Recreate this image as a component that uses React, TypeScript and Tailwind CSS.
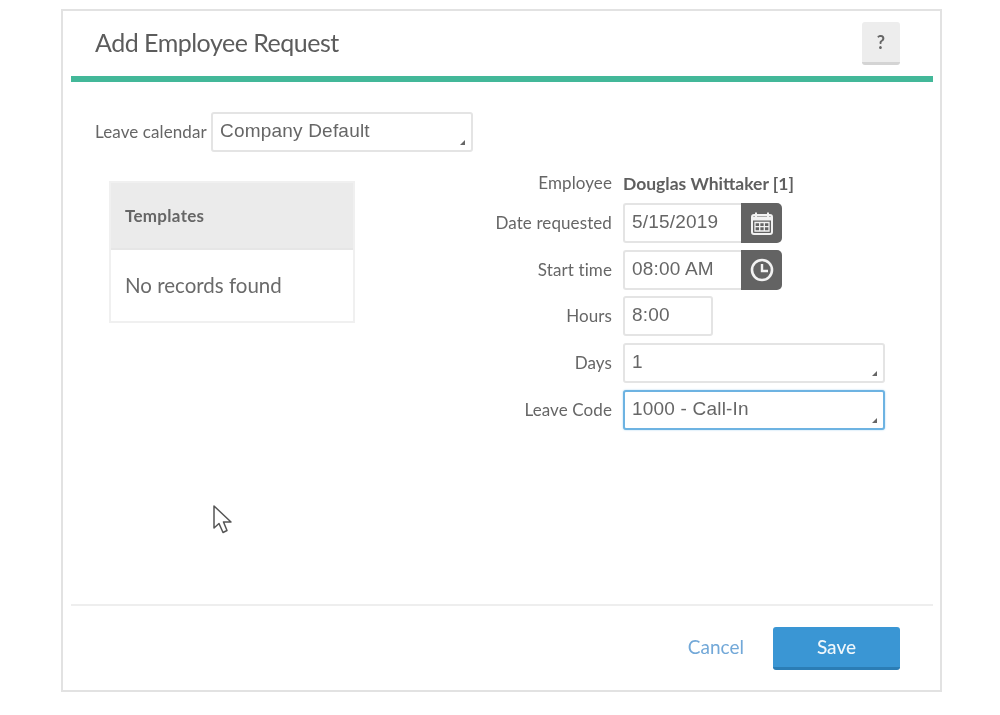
import React from "react";

const lato = "font-['Lato','Open_Sans',sans-serif]";
const arial = "font-['Liberation_Sans',Arial,sans-serif]";

function Grip() {
  return (
    <svg className="absolute right-[6px] bottom-[5px]" width="5" height="5" viewBox="0 0 5 5">
      <path d="M5 0V5H0Z" fill="#666" />
    </svg>
  );
}

function Label({ children }: { children: React.ReactNode }) {
  return (
    <div className={`${lato} w-[211px] pb-[2px] pr-[11px] text-right text-[17px] leading-none tracking-[0.1px] text-[#666]`}>{children}</div>
  );
}

function Box({ children, w, grip, focus, addon }: { children: React.ReactNode; w: string; grip?: boolean; focus?: boolean; addon?: boolean }) {
  return (
    <div
      className={`${arial} ${w} ${focus ? "border-[#6db3e2] shadow-[0_0_2px_#a5d2ee]" : "border-[#e4e4e4]"} ${addon ? "rounded-l-[3px] border-r-0" : "rounded-[3px]"} relative h-[40px] border-2 bg-white pl-[7px] pt-[4px] text-[19px] leading-[26px] tracking-[0.2px] text-[#666]`}
    >
      {children}
      {grip && <Grip />}
    </div>
  );
}

function AddonButton({ children }: { children: React.ReactNode }) {
  return (
    <div className="flex h-[40px] w-[41px] items-center justify-center rounded-r-[5px] bg-[#636363]">{children}</div>
  );
}

function FormRow({ label, children }: { label: string; children: React.ReactNode }) {
  return (
    <div className="flex h-[40px] items-center">
      <Label>{label}</Label>
      {children}
    </div>
  );
}

export default function App() {
  return (
    <div className="relative h-[715px] w-[1000px] bg-white pl-[61px] pt-[9px] blur-[0.4px]">
      <div className="flex h-[683px] w-[881px] flex-col border-2 border-[#e2e2e2] pl-[8px] pr-[7px]">
        <header className="flex h-[65px] items-start justify-between pl-[24px] pr-[33px]">
          <h1 className={`${lato} pt-[15px] text-[25px] font-normal leading-[32px] tracking-[-0.5px] text-[#5c5c5c]`}>Add Employee Request</h1>
          <div className={`${lato} mt-[11px] flex h-[43px] w-[38px] items-center justify-center rounded-[3px] border-b-[3px] border-[#d4d4d4] bg-[#ededed] text-[18px] font-bold text-[#666]`}>?</div>
        </header>
        <div className="h-[6px] bg-[#43b899]" />

        <main className="flex-1 pl-[24px]">
          <div className="mt-[30px] flex h-[40px] items-center">
            <span className={`${lato} w-[116px] pb-[2px] text-[17px] leading-none tracking-[0.1px] text-[#666]`}>Leave calendar</span>
            <Box w="w-[262px]" grip>Company Default</Box>
          </div>

          <div className="mt-[29px] flex items-start">
            <section className={`${lato} ml-[14px] h-[142px] w-[246px] border-2 border-[#f0f0f0]`}>
              <div className="flex h-[65px] items-center bg-[#ebebeb] pl-[14px] text-[17px] font-bold tracking-[0.3px] text-[#666]">Templates</div>
              <div className="flex h-[73px] items-center border-t-2 border-[#e6e6e6] pl-[14px] text-[20.5px] text-[#6a6a6a]">No records found</div>
            </section>

            <div className="ml-[57px] flex flex-col gap-[7px]">
              <div className="-mt-[5px] mb-[5px] flex h-[15px] items-center">
                <Label>Employee</Label>
                <span className={`${lato} text-[17.5px] font-bold leading-none text-[#5f5f5f]`}>Douglas Whittaker [1]</span>
              </div>
              <FormRow label="Date requested">
                <Box w="w-[118px]" addon>5/15/2019</Box>
                <AddonButton>
                  <svg width="24" height="25" viewBox="0 0 24 25" fill="none" stroke="#f2f2f2">
                    <rect x="2" y="4" width="20" height="19" rx="2" strokeWidth="2" />
                    <path d="M6 1.5V6M18 1.5V6" strokeWidth="2" />
                    <path d="M2 7.5H22" strokeWidth="4" />
                    <path d="M5 11.5H19V20H5ZM5 15.7H19M9.7 11.5V20M14.3 11.5V20" strokeWidth="1.3" />
                  </svg>
                </AddonButton>
              </FormRow>
              <FormRow label="Start time">
                <Box w="w-[118px]" addon>08:00 AM</Box>
                <AddonButton>
                  <svg width="26" height="26" viewBox="0 0 26 26" fill="none" stroke="#f2f2f2" strokeWidth="2.6">
                    <circle cx="13" cy="13" r="10" />
                    <path d="M13 7V14H19" strokeWidth="2.4" />
                  </svg>
                </AddonButton>
              </FormRow>
              <div className="-mt-[1px]">
                <FormRow label="Hours">
                  <Box w="w-[90px]">8:00</Box>
                </FormRow>
              </div>
              <FormRow label="Days">
                <Box w="w-[262px]" grip>1</Box>
              </FormRow>
              <FormRow label="Leave Code">
                <Box w="w-[262px]" grip focus>1000 - Call-In</Box>
              </FormRow>
            </div>
          </div>
        </main>

        <footer className="flex h-[86px] items-start justify-end border-t-2 border-[#eeeeee] pr-[33px]">
          <a className={`${lato} mt-[20px] text-[19px] leading-[42px] text-[#72a8d8]`}>Cancel</a>
          <button className={`${lato} ml-[29px] mt-[21px] h-[43px] w-[127px] rounded-[3px] border-b-[3px] border-[#2b7db5] bg-[#3a96d4] text-[19px] font-medium text-[#eef6fb]`}>Save</button>
        </footer>
      </div>

      <svg className="absolute left-[212px] top-[504px]" width="22" height="32" viewBox="0 0 22 32" fill="white" stroke="#555" strokeWidth="1.5" strokeLinejoin="round">
        <path d="M2 2V24L7 19.5L11 28.5L15 26.5L11.5 18H19Z" />
      </svg>
    </div>
  );
}
